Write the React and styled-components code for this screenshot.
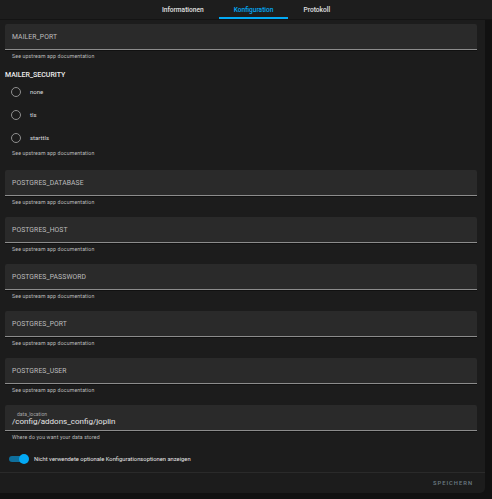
import React from "react";
import styled, { createGlobalStyle } from "styled-components";

const Global = createGlobalStyle`
  html, body {
    margin: 0;
    padding: 0;
    background: #111111;
  }
  * {
    box-sizing: border-box;
  }
`;

const Page = styled.div`
  width: 492px;
  height: 499px;
  background: #111111;
  font-family: Roboto, "Noto Sans", sans-serif;
  color: #e1e1e1;
  overflow: hidden;
`;

const TabBar = styled.nav`
  height: 20px;
  display: flex;
  justify-content: center;
  background: #1d1d1d;
  border-bottom: 1px solid #141414;
`;

const Tab = styled.div`
  padding: 0 15px;
  height: 19px;
  display: flex;
  align-items: center;
  font-size: 6.6px;
  font-weight: 500;
  color: ${(p) => (p.$active ? "#03a9f4" : "#e1e1e1")};
  border-bottom: 2px solid ${(p) => (p.$active ? "#03a9f4" : "transparent")};
  padding-top: 2px;
`;

const Card = styled.section`
  width: 485px;
  height: 473px;
  background: #1c1c1c;
  border-bottom-right-radius: 5px;
  display: flex;
  flex-direction: column;
`;

const Content = styled.div`
  flex: 1;
  padding: 4px 8px 0 5px;
  display: flex;
  flex-direction: column;
`;

const Block = styled.div`
  margin-bottom: ${(p) => p.$gap ?? 11}px;
`;

const Field = styled.div`
  height: 26px;
  background: #2a2a2a;
  border-radius: 2px 2px 0 0;
  border-bottom: 1px solid #8c8c8c;
  box-shadow: 0 1px 0 #111111;
  padding: 0 7px;
  display: flex;
  flex-direction: column;
  justify-content: center;
`;

const FieldLabel = styled.div`
  font-size: 6.8px;
  color: #bdbdbd;
  letter-spacing: 0.1px;
`;

const FloatLabel = styled.div`
  font-size: 5px;
  color: #a6a6a6;
  padding-left: 5px;
  line-height: 6px;
  margin-top: 2px;
`;

const Value = styled.div`
  font-size: 8px;
  color: #e6e6e6;
  line-height: 10px;
`;

const Helper = styled.div`
  padding: ${(p) => p.$top ?? 3}px 7px 0;
  font-size: 5.2px;
  line-height: 7px;
  letter-spacing: 0.15px;
  color: #bcbcbc;
`;

const GroupTitle = styled.div`
  height: 9px;
  font-size: 7px;
  font-weight: 500;
  color: #eeeeee;
  line-height: 9px;
`;

const RadioRow = styled.label`
  height: 23px;
  display: flex;
  align-items: center;
  padding-left: 6px;
  gap: 9px;
  font-size: 6px;
  color: #dcdcdc;
`;

const RadioDot = styled.span`
  width: 10px;
  height: 10px;
  border-radius: 50%;
  border: 1.3px solid #8f8f8f;
`;

const ToggleRow = styled.div`
  height: 14px;
  display: flex;
  align-items: center;
  gap: 8px;
  font-size: 5.8px;
  color: #e6e6e6;
`;

const Toggle = styled.span`
  position: relative;
  width: 17px;
  height: 6px;
  border-radius: 3px;
  background: #0f6f9c;
  margin-left: 4px;

  &::after {
    content: "";
    position: absolute;
    right: -3px;
    top: -2px;
    width: 10px;
    height: 10px;
    border-radius: 50%;
    background: #03a9f4;
  }
`;

const Footer = styled.footer`
  height: 21px;
  border-top: 1px solid #2a2a2a;
  display: flex;
  align-items: center;
  justify-content: flex-end;
  padding-right: 12px;
`;

const SaveButton = styled.button`
  background: none;
  border: none;
  padding: 0;
  font-family: inherit;
  font-size: 5.8px;
  font-weight: 500;
  letter-spacing: 1px;
  color: #6d7c84;
  text-transform: uppercase;
`;

const helper = "See upstream app documentation";

const textFields = [
  "POSTGRES_DATABASE",
  "POSTGRES_HOST",
  "POSTGRES_PASSWORD",
  "POSTGRES_PORT",
  "POSTGRES_USER",
];

const App = () => {
  return (
    <Page>
      <Global />
      <TabBar>
        <Tab>Informationen</Tab>
        <Tab $active>Konfiguration</Tab>
        <Tab>Protokoll</Tab>
      </TabBar>
      <Card>
        <Content>
          <Block>
            <Field>
              <FieldLabel>MAILER_PORT</FieldLabel>
            </Field>
            <Helper>{helper}</Helper>
          </Block>
          <Block $gap={13}>
            <GroupTitle>MAILER_SECURITY</GroupTitle>
            {["none", "tls", "starttls"].map((o) => (
              <RadioRow key={o}>
                <RadioDot />
                {o}
              </RadioRow>
            ))}
            <Helper $top={1}>{helper}</Helper>
          </Block>
          {textFields.map((name) => (
            <Block key={name}>
              <Field>
                <FieldLabel>{name}</FieldLabel>
              </Field>
              <Helper>{helper}</Helper>
            </Block>
          ))}
          <Block $gap={11}>
            <Field>
              <FloatLabel>data_location</FloatLabel>
              <Value>/config/addons_config/joplin</Value>
            </Field>
            <Helper>Where do you want your data stored</Helper>
          </Block>
          <ToggleRow>
            <Toggle />
            Nicht verwendete optionale Konfigurationsoptionen anzeigen
          </ToggleRow>
        </Content>
        <Footer>
          <SaveButton>Speichern</SaveButton>
        </Footer>
      </Card>
    </Page>
  );
};

export default App;
